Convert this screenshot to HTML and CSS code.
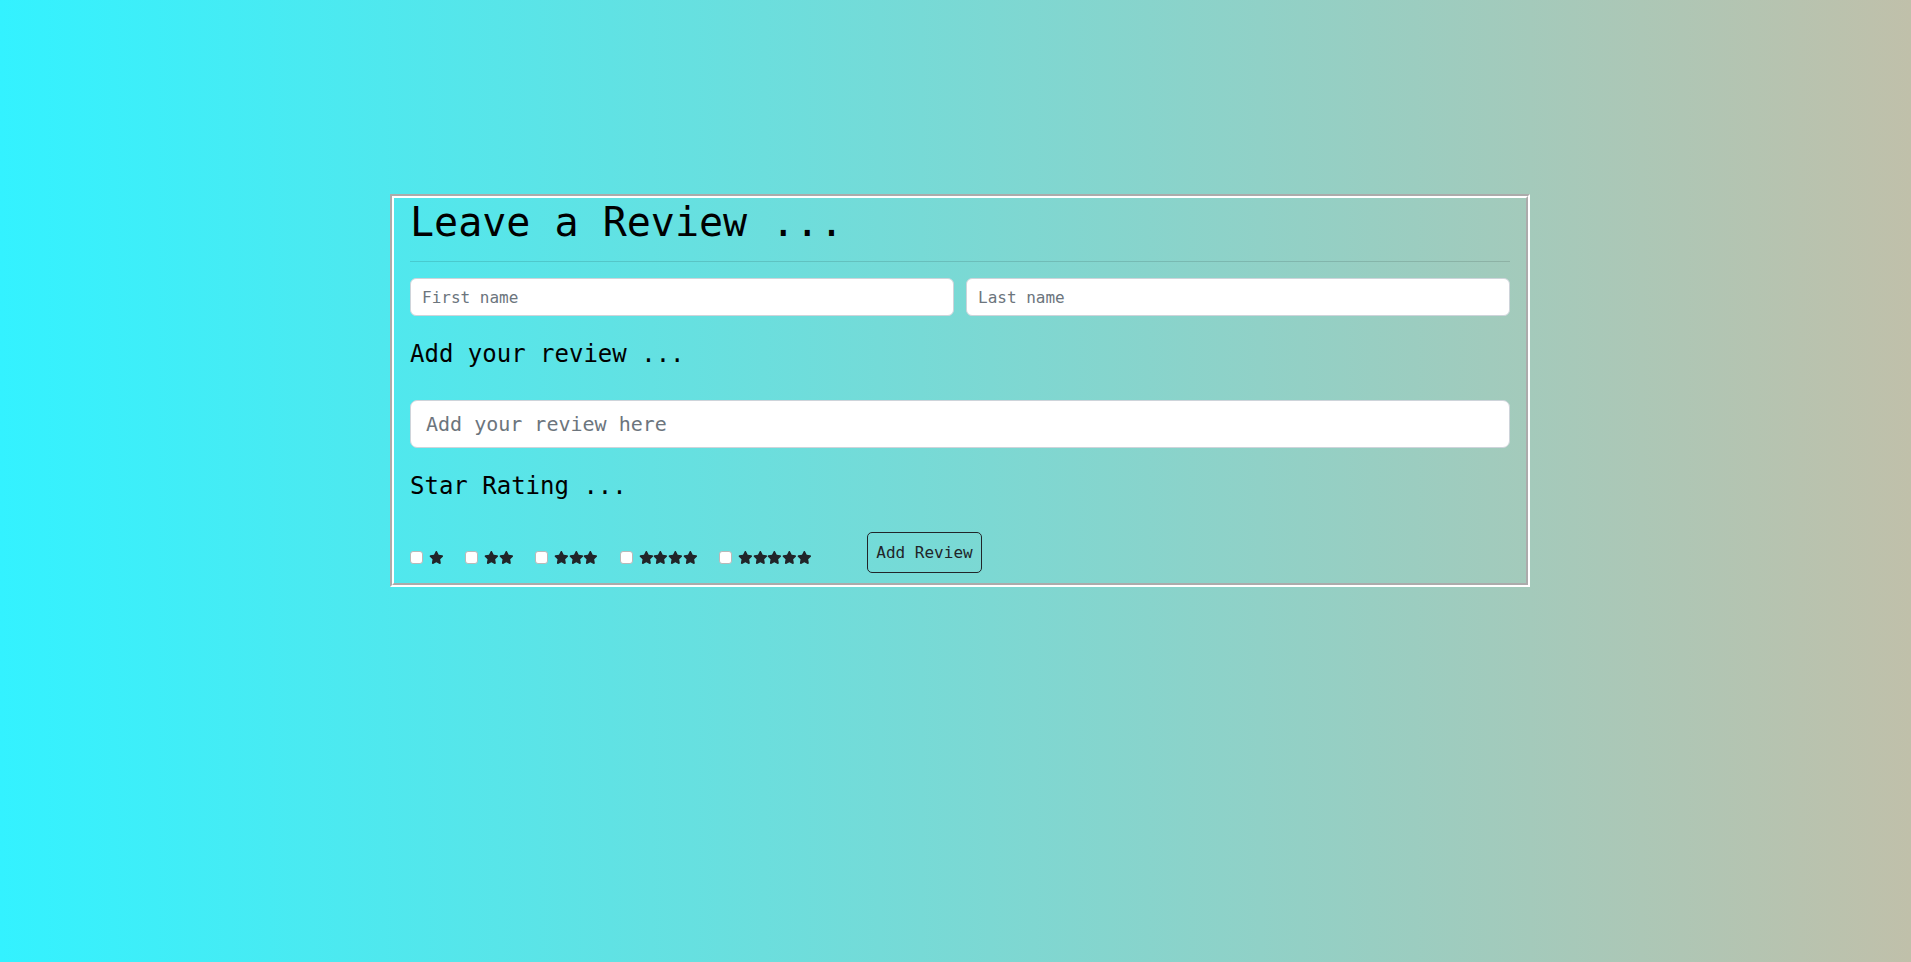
FILE: index.html
```html
<!DOCTYPE html>
<html lang="en">
<head>
<meta charset="utf-8">
<title>Leave a Review</title>
<link rel="stylesheet" href="styles.css">
</head>
<body>
<svg width="0" height="0" class="defs" aria-hidden="true">
  <defs>
    <symbol id="star" viewBox="0 0 576 512">
      <path d="M316.9 18C311.6 7 300.4 0 288.1 0s-23.4 7-28.8 18L195 150.3 51.4 171.5c-12 1.8-22 10.2-25.7 21.7s-.7 24.2 7.9 32.7L137.8 329 113.2 474.7c-2 12 3 24.2 12.9 31.3s23 8 33.8 2.3l128.3-68.5 128.3 68.5c10.8 5.7 23.900 4.9 33.8-2.3s14.9-19.3 12.9-31.3L438.5 329 542.7 225.9c8.6-8.5 11.7-21.2 7.9-32.7s-13.7-19.9-25.7-21.7L381.2 150.3 316.9 18z"/>
    </symbol>
  </defs>
</svg>
<div class="page">
  <form class="card">
    <h1 class="title">Leave a Review ...</h1>
    <hr class="rule">
    <div class="names">
      <input class="field" type="text" placeholder="First name">
      <input class="field" type="text" placeholder="Last name">
    </div>
    <h4 class="label">Add your review ...</h4>
    <input class="field field-lg" type="text" placeholder="Add your review here">
    <h4 class="label label-stars">Star Rating ...</h4>
    <div class="rating-row">
      <label class="opt"><input class="check" type="checkbox"><span class="stars"><svg class="star"><use href="#star"/></svg></span></label>
      <label class="opt"><input class="check" type="checkbox"><span class="stars"><svg class="star"><use href="#star"/></svg><svg class="star"><use href="#star"/></svg></span></label>
      <label class="opt"><input class="check" type="checkbox"><span class="stars"><svg class="star"><use href="#star"/></svg><svg class="star"><use href="#star"/></svg><svg class="star"><use href="#star"/></svg></span></label>
      <label class="opt"><input class="check" type="checkbox"><span class="stars"><svg class="star"><use href="#star"/></svg><svg class="star"><use href="#star"/></svg><svg class="star"><use href="#star"/></svg><svg class="star"><use href="#star"/></svg></span></label>
      <label class="opt"><input class="check" type="checkbox"><span class="stars"><svg class="star"><use href="#star"/></svg><svg class="star"><use href="#star"/></svg><svg class="star"><use href="#star"/></svg><svg class="star"><use href="#star"/></svg><svg class="star"><use href="#star"/></svg></span></label>
      <button class="btn" type="button">Add Review</button>
    </div>
  </form>
</div>
</body>
</html>
```
FILE: styles.css
```css
* {
  box-sizing: border-box;
}

html, body {
  margin: 0;
  padding: 0;
}

body {
  min-height: 100vh;
  background: linear-gradient(to right, #33f2ff 0%, #c0c0aa 100%);
  font-family: "DejaVu Sans Mono", "Liberation Mono", monospace;
  color: #212529;
}

.defs {
  position: absolute;
  width: 0;
  height: 0;
  overflow: hidden;
}

.page {
  padding: 194px 0 0 390px;
}

.card {
  width: 1140px;
  border: 4px groove #ffffff;
  padding: 0 16px 10px 16px;
  display: flex;
  flex-direction: column;
}

.title {
  margin: 0;
  font-size: 40px;
  line-height: 48px;
  font-weight: 400;
  color: #000;
}

.rule {
  margin: 15px 0 16px;
  border: 0;
  border-top: 1px solid rgba(0, 0, 0, 0.12);
  height: 0;
}

.names {
  display: grid;
  grid-template-columns: 1fr 1fr;
  gap: 12px;
}

.field {
  display: block;
  width: 100%;
  height: 38px;
  padding: 0 11px;
  font-family: inherit;
  font-size: 16px;
  color: #212529;
  background: #fff;
  border: 1px solid #ced4da;
  border-radius: 6px;
  outline: none;
}

.field::placeholder {
  color: #6c757d;
}

.field-lg {
  height: 48px;
  padding: 0 15px;
  font-size: 20px;
  border-radius: 7px;
}

.label {
  margin: 24px 0 31px;
  font-size: 24px;
  line-height: 28.8px;
  font-weight: 400;
  color: #000;
}

.label-stars {
  margin: 24px 0 31px;
}

.rating-row {
  display: flex;
  align-items: flex-end;
  gap: 21.5px;
  height: 41px;
}

.opt {
  display: flex;
  align-items: center;
  gap: 6px;
  margin-bottom: 8px;
  height: 14px;
}

.check {
  appearance: none;
  -webkit-appearance: none;
  margin: 0;
  width: 13px;
  height: 13px;
  background: #fff;
  border: 1px solid #b9b9b9;
  border-radius: 3px;
}

.stars {
  display: flex;
  color: #212529;
  margin-top: -1px;
}

.star {
  width: 14.7px;
  height: 13px;
  fill: currentColor;
}

.btn {
  margin-left: 34.5px;
  height: 41px;
  padding: 0 8px;
  font-family: inherit;
  font-size: 16px;
  color: #212529;
  background: transparent;
  border: 1px solid #212529;
  border-radius: 5px;
}
```
